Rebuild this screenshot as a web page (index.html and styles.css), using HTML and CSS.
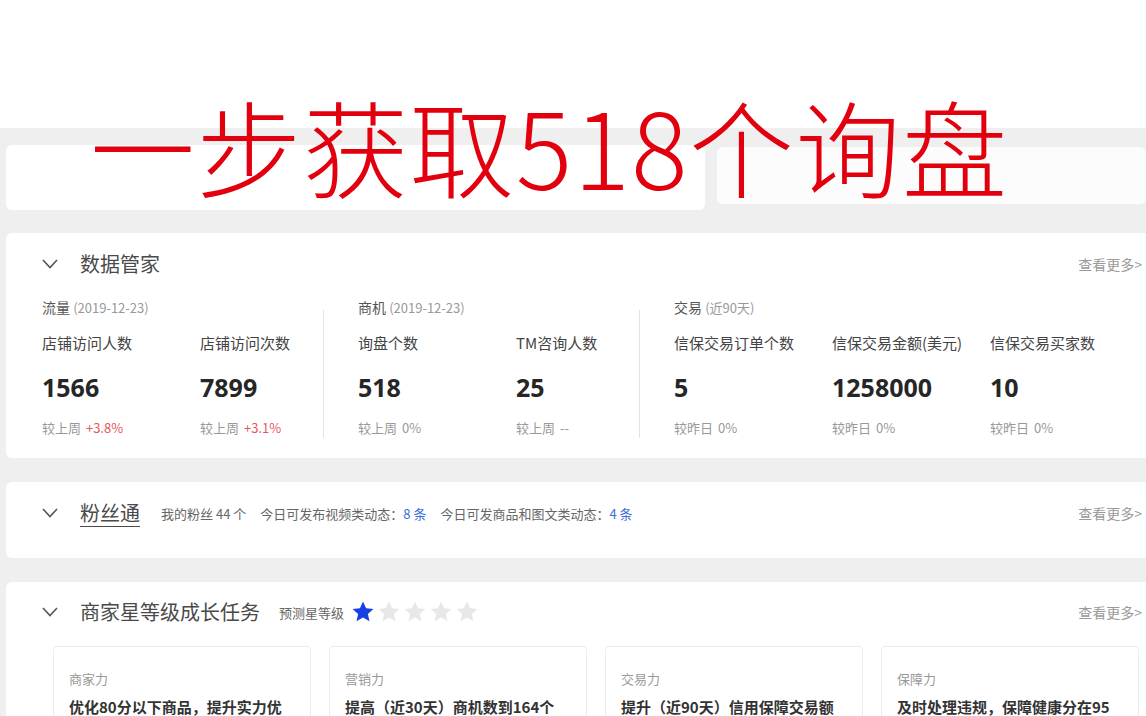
FILE: index.html
```html
<!DOCTYPE html>
<html lang="zh-CN">
<head>
    <meta charset="UTF-8">
    <meta name="viewport" content="width=device-width, initial-scale=1.0">
    <title>一步获取518个询盘</title>
    <link rel="stylesheet" href="styles.css">
</head>
<body>
    <div class="page">
        <div class="top-white"></div>

        <div class="ghost-row">
            <div class="ghost-card"></div>
            <div class="ghost-blur"></div>
        </div>

        <section class="card card-data">
            <header class="card-head">
                <svg class="chevron" width="16" height="10" viewBox="0 0 16 10"><polyline points="1,1 8,8.5 15,1" fill="none" stroke="#555" stroke-width="1.6"/></svg>
                <h2 class="card-title">数据管家</h2>
                <a class="more">查看更多&gt;</a>
            </header>
            <div class="groups">
                <div class="group">
                    <div class="group-main">
                        <div class="group-label">流量 <span class="date">(2019-12-23)</span></div>
                        <div class="metrics">
                            <div class="metric">
                                <div class="metric-name">店铺访问人数</div>
                                <div class="metric-value">1566</div>
                                <div class="metric-change">较上周 <span class="up">+3.8%</span></div>
                            </div>
                            <div class="metric">
                                <div class="metric-name">店铺访问次数</div>
                                <div class="metric-value">7899</div>
                                <div class="metric-change">较上周 <span class="up">+3.1%</span></div>
                            </div>
                        </div>
                    </div>
                    <div class="divider"></div>
                </div>
                <div class="group">
                    <div class="group-main">
                        <div class="group-label">商机 <span class="date">(2019-12-23)</span></div>
                        <div class="metrics">
                            <div class="metric">
                                <div class="metric-name">询盘个数</div>
                                <div class="metric-value">518</div>
                                <div class="metric-change">较上周 <span>0%</span></div>
                            </div>
                            <div class="metric">
                                <div class="metric-name">TM咨询人数</div>
                                <div class="metric-value">25</div>
                                <div class="metric-change">较上周 <span>--</span></div>
                            </div>
                        </div>
                    </div>
                    <div class="divider"></div>
                </div>
                <div class="group">
                    <div class="group-main">
                        <div class="group-label">交易 <span class="date">(近90天)</span></div>
                        <div class="metrics">
                            <div class="metric">
                                <div class="metric-name">信保交易订单个数</div>
                                <div class="metric-value">5</div>
                                <div class="metric-change">较昨日 <span>0%</span></div>
                            </div>
                            <div class="metric">
                                <div class="metric-name">信保交易金额(美元)</div>
                                <div class="metric-value">1258000</div>
                                <div class="metric-change">较昨日 <span>0%</span></div>
                            </div>
                            <div class="metric">
                                <div class="metric-name">信保交易买家数</div>
                                <div class="metric-value">10</div>
                                <div class="metric-change">较昨日 <span>0%</span></div>
                            </div>
                        </div>
                    </div>
                </div>
            </div>
        </section>

        <section class="card card-fans">
            <header class="card-head">
                <svg class="chevron" width="16" height="10" viewBox="0 0 16 10"><polyline points="1,1 8,8.5 15,1" fill="none" stroke="#555" stroke-width="1.6"/></svg>
                <h2 class="card-title link">粉丝通</h2>
                <div class="fans-info">
                    <span>我的粉丝 44 个</span>
                    <span>今日可发布视频类动态：<b class="blue">8 条</b></span>
                    <span>今日可发商品和图文类动态：<b class="blue">4 条</b></span>
                </div>
                <a class="more">查看更多&gt;</a>
            </header>
        </section>

        <section class="card card-star">
            <header class="card-head">
                <svg class="chevron" width="16" height="10" viewBox="0 0 16 10"><polyline points="1,1 8,8.5 15,1" fill="none" stroke="#555" stroke-width="1.6"/></svg>
                <h2 class="card-title">商家星等级成长任务</h2>
                <span class="star-label">预测星等级</span>
                <div class="stars">
                    <svg class="star on" viewBox="0 0 24 24"><path d="M12 1.5l3.1 6.7 7.3.8-5.5 5 1.6 7.3L12 17.6l-6.5 3.7 1.6-7.3-5.5-5 7.3-.8z"/></svg>
                    <svg class="star" viewBox="0 0 24 24"><path d="M12 1.5l3.1 6.7 7.3.8-5.5 5 1.6 7.3L12 17.6l-6.5 3.7 1.6-7.3-5.5-5 7.3-.8z"/></svg>
                    <svg class="star" viewBox="0 0 24 24"><path d="M12 1.5l3.1 6.7 7.3.8-5.5 5 1.6 7.3L12 17.6l-6.5 3.7 1.6-7.3-5.5-5 7.3-.8z"/></svg>
                    <svg class="star" viewBox="0 0 24 24"><path d="M12 1.5l3.1 6.7 7.3.8-5.5 5 1.6 7.3L12 17.6l-6.5 3.7 1.6-7.3-5.5-5 7.3-.8z"/></svg>
                    <svg class="star" viewBox="0 0 24 24"><path d="M12 1.5l3.1 6.7 7.3.8-5.5 5 1.6 7.3L12 17.6l-6.5 3.7 1.6-7.3-5.5-5 7.3-.8z"/></svg>
                </div>
                <a class="more">查看更多&gt;</a>
            </header>
            <div class="tasks">
                <div class="task">
                    <div class="task-label">商家力</div>
                    <div class="task-text">优化80分以下商品，提升实力优</div>
                </div>
                <div class="task">
                    <div class="task-label">营销力</div>
                    <div class="task-text">提高（近30天）商机数到164个</div>
                </div>
                <div class="task">
                    <div class="task-label">交易力</div>
                    <div class="task-text">提升（近90天）信用保障交易额</div>
                </div>
                <div class="task">
                    <div class="task-label">保障力</div>
                    <div class="task-text">及时处理违规，保障健康分在95</div>
                </div>
            </div>
        </section>
    </div>

    <h1 class="headline">一步获取518个询盘</h1>
</body>
</html>
```

FILE: styles.css
```css
body {
    margin: 0;
    background: #efefef;
    font-family: "Noto Sans CJK SC", "Noto Sans", sans-serif;
    color: #333;
    overflow: hidden;
    position: relative;
}

.page {
    width: 1146px;
    height: 716px;
    overflow: hidden;
}

.top-white {
    height: 128px;
    background: #fff;
}

.ghost-row {
    display: flex;
    padding-top: 17px;
    height: 65px;
}

.ghost-card {
    width: 699px;
    margin-left: 6px;
    background: #fff;
    border-radius: 6px;
}

.ghost-blur {
    flex: 1;
    margin: 2px 0 6px 12px;
    background: #fcfcfc;
    border-radius: 6px;
}

.card {
    width: 1150px;
    margin-left: 6px;
    background: #fff;
    border-radius: 6px;
    box-sizing: border-box;
    padding: 0 14px 0 36px;
}

.card-head {
    display: flex;
    align-items: center;
    height: 24px;
}

.chevron {
    margin-right: 22px;
    flex-shrink: 0;
}

.card-title {
    margin: 0;
    font-size: 20px;
    font-weight: 400;
    color: #4a4a4a;
    line-height: 24px;
    white-space: nowrap;
}

.card-title.link {
    text-decoration: underline;
    text-underline-offset: 5px;
    text-decoration-thickness: 1px;
}

.more {
    margin-left: auto;
    font-size: 14px;
    color: #9a9a9a;
    white-space: nowrap;
}

/* 数据管家 */
.card-data {
    height: 225px;
    margin-top: 23px;
    padding-top: 19px;
}

.groups {
    display: flex;
    margin-top: 22px;
}

.group {
    display: flex;
}

.group-main {
    width: 281px;
}

.group:last-child .group-main {
    width: auto;
}

.divider {
    width: 1px;
    height: 128px;
    margin-top: 12px;
    margin-right: 34px;
    background: #e2e2e2;
}

.group-label {
    font-size: 14px;
    line-height: 18px;
    color: #555;
}

.date {
    font-size: 13px;
    color: #999;
}

.metrics {
    display: flex;
    margin-top: 16px;
}

.metric {
    width: 158px;
    flex-shrink: 0;
}

.metric-name {
    font-size: 15px;
    line-height: 20px;
    color: #444;
    white-space: nowrap;
}

.metric-value {
    margin-top: 18px;
    font-family: "Open Sans", "Noto Sans", sans-serif;
    font-size: 25px;
    font-weight: 700;
    line-height: 32px;
    color: #262626;
}

.metric-change {
    margin-top: 16px;
    font-size: 13px;
    line-height: 18px;
    color: #999;
}

.metric-change span {
    margin-left: 2px;
}

.up {
    color: #e8555a;
}

/* 粉丝通 */
.card-fans {
    height: 76px;
    margin-top: 24px;
    padding-top: 19px;
}

.fans-info {
    display: flex;
    gap: 14px;
    margin-left: 21px;
    font-size: 13px;
    color: #666;
    white-space: nowrap;
}

.blue {
    font-weight: 400;
    color: #3b6fd6;
}

/* 商家星等级 */
.card-star {
    height: 200px;
    margin-top: 24px;
    padding-top: 18px;
}

.star-label {
    margin-left: 19px;
    font-size: 13px;
    color: #666;
    white-space: nowrap;
}

.stars {
    display: flex;
    gap: 2px;
    margin-left: 7px;
}

.star {
    width: 24px;
    height: 24px;
    fill: #e8e8e8;
}

.star.on {
    fill: #1740e3;
}

.tasks {
    display: flex;
    gap: 18px;
    margin: 22px 0 0 11px;
}

.task {
    width: 258px;
    height: 90px;
    box-sizing: border-box;
    padding: 23px 0 0 15px;
    border: 1px solid #ececec;
    border-radius: 4px;
}

.task-label {
    font-size: 13px;
    line-height: 18px;
    color: #999;
}

.task-text {
    margin-top: 8px;
    font-size: 15px;
    font-weight: 700;
    line-height: 22px;
    color: #333;
    white-space: nowrap;
}

/* 视频封面标题 */
.headline {
    position: absolute;
    left: 90px;
    top: 79px;
    margin: 0;
    font-size: 105px;
    font-weight: 200;
    line-height: 130px;
    letter-spacing: 1.5px;
    color: #e2000f;
    white-space: nowrap;
}
```
